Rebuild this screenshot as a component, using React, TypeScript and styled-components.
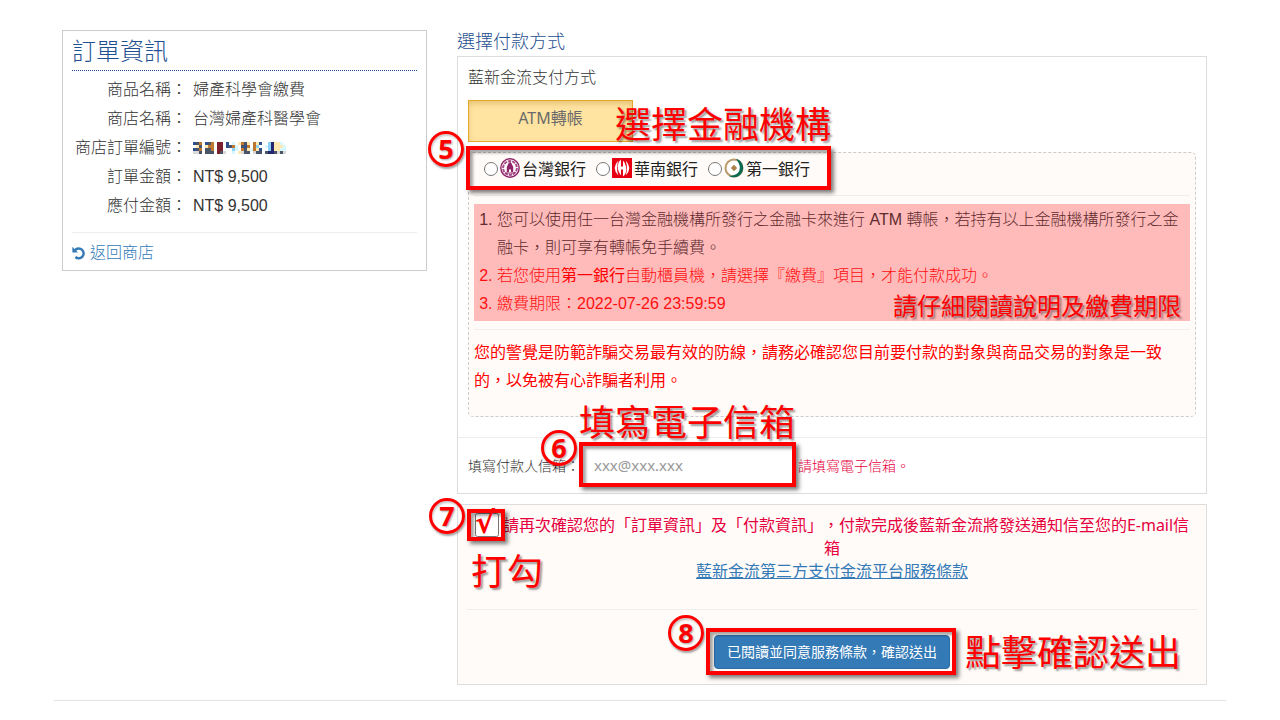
import React from "react";
import styled, { createGlobalStyle, css } from "styled-components";

const sans = `"Liberation Sans", "Noto Sans CJK TC", sans-serif`;
const humanist = `"Noto Sans", "Noto Sans CJK TC", sans-serif`;

const GlobalStyle = createGlobalStyle`
  * { box-sizing: border-box; }
  body {
    margin: 0;
    background: #fff;
    color: #333;
    font-family: ${sans};
    font-size: 16px;
    font-weight: 300;
    text-spacing-trim: space-all;
  }
`;

const Page = styled.div`
  padding: 30px 54px 0;
`;

const Columns = styled.main`
  display: grid;
  grid-template-columns: 365fr 750fr;
  gap: 30px;
  align-items: start;
  padding: 0 19px 15px 8px;
  border-bottom: 1px solid #e3e3e3;
`;

/* ---------- order summary ---------- */

const OrderCard = styled.section`
  border: 1px solid #ccc;
  padding: 0 9px;
`;

const OrderTitle = styled.h1`
  margin: 0;
  height: 40px;
  line-height: 42px;
  font-size: 24px;
  font-weight: 300;
  color: #1f5190;
  border-bottom: 1px dotted #1f5190;
`;

const OrderTable = styled.table`
  width: 100%;
  margin: 4px 0 12px;
  border-collapse: collapse;
`;

const OrderLabel = styled.th`
  width: 115px;
  padding: 0;
  line-height: 29px;
  font-weight: 300;
  text-align: right;
  white-space: nowrap;
`;

const OrderValue = styled.td`
  padding: 0 0 0 6px;
  line-height: 29px;
`;

const BackRow = styled.div`
  border-top: 1px solid #eee;
  height: 38px;
  padding-top: 8px;
`;

const BackLink = styled.a`
  display: flex;
  align-items: center;
  gap: 4px;
  color: #337ab7;
  text-decoration: none;
  line-height: 24px;
`;

const Mosaic = styled.svg`
  display: block;
`;

/* ---------- payment ---------- */

const PaymentTitle = styled.h2`
  margin: 0;
  height: 26px;
  line-height: 24px;
  font-size: 18px;
  font-weight: 300;
  color: #1f5190;
`;

const Panel = styled.section<{ $tinted?: boolean }>`
  border: 1px solid #ddd;
  background: ${(p) => (p.$tinted ? "#fffbf8" : "#fff")};
`;

const MethodBlock = styled.div`
  padding: 9px 10px 20px;
`;

const MethodTitle = styled.h3`
  margin: 0 0 10px;
  line-height: 24px;
  font-size: 16px;
  font-weight: 300;
`;

const MethodButton = styled.button`
  display: block;
  width: 165px;
  height: 42px;
  padding: 0 0 8px;
  border: 1px solid #e5a52d;
  background: #ffe3a0;
  box-shadow: inset 0 3px 5px rgba(160, 110, 0, 0.25);
  color: #6b6b6b;
  font: 16px ${humanist};
`;

const MethodDetails = styled.div`
  margin-top: 10px;
  padding: 0 5px 21px;
  border: 1px dashed #ccc;
  border-radius: 5px;
  background: #fffbf8;
`;

const BankRow = styled.div`
  display: flex;
  gap: 10px;
  height: 43px;
  padding: 3px 0 0 10px;
  border-bottom: 1px solid #eee;
`;

const BankOption = styled.label`
  display: flex;
  align-items: center;
  height: 24px;
  color: #222;
  font-weight: 400;
  white-space: nowrap;

  input {
    width: 14px;
    height: 14px;
    margin: 2px 2px 0 0;
  }

  svg {
    flex: none;
    margin-right: 2px;
  }
`;

const Notes = styled.ol`
  margin: 8px 0;
  padding: 2px 8px 3px 23px;
  background: #ffbaba;
  line-height: 28px;
`;

const Note = styled.li<{ $alert?: boolean }>`
  color: ${(p) => (p.$alert ? "#ff1010" : "#5e2b2e")};

  strong {
    font-weight: 400;
    color: #f00;
  }
`;

const FraudWarning = styled.p`
  margin: 0;
  padding-top: 9px;
  border-top: 1px solid #eee;
  line-height: 28px;
  font-weight: 400;
  color: #f00;
`;

const EmailRow = styled.div`
  display: flex;
  align-items: center;
  height: 56px;
  padding: 0 10px 2px;
  border-top: 1px solid #eee;
  font-size: 14px;
`;

const EmailInput = styled.input`
  display: block;
  width: 216px;
  height: 44px;
  padding: 0 14px;
  border: 0;
  background: transparent;
  color: #444;
  font: 15px ${humanist};

  &::placeholder {
    color: #999;
  }
`;

const FieldError = styled.span`
  margin-left: 2px;
  color: #e6003e;
`;

const ConfirmPanel = styled(Panel)`
  margin-top: 10px;
  padding: 9px 9px 15px;
`;

const ConfirmText = styled.div`
  height: 95px;
  font-family: ${humanist};
  font-weight: 400;
  line-height: 23px;
  text-align: center;
  color: #e6003e;

  a {
    color: #337ab7;
  }
`;

const ConfirmCheck = styled.input`
  width: 24px;
  height: 24px;
  margin: -1px 0;
`;

const SubmitRow = styled.div`
  display: flex;
  justify-content: center;
  padding-top: 25px;
  border-top: 1px solid #eee;
`;

const SubmitButton = styled.button`
  display: block;
  width: 236px;
  height: 34px;
  padding: 0 0 2px;
  border: 1px solid #2e6da4;
  border-radius: 4px;
  background: #337ab7;
  color: #fff;
  font: 14px ${sans};
`;

/* ---------- tutorial marks laid over the page ---------- */

const Marked = styled.div`
  position: relative;
`;

const MarkedInline = styled.span`
  position: relative;
  display: inline-block;
  height: 23px;
  margin-right: 4px;
  vertical-align: top;
`;

const Overlay = css<{ $left: number; $top: number }>`
  position: absolute;
  left: ${(p) => p.$left}px;
  top: ${(p) => p.$top}px;
  pointer-events: none;
`;

const Frame = styled.span<{ $left: number; $top: number; $width: number; $height: number }>`
  ${Overlay}
  width: ${(p) => p.$width}px;
  height: ${(p) => p.$height}px;
  border: 4px solid #f00;
  box-shadow: 3px 3px 4px rgba(0, 0, 0, 0.5), inset 3px 3px 3px rgba(0, 0, 0, 0.35);
`;

const Step = styled.span<{ $left: number; $top: number }>`
  ${Overlay}
  z-index: 1;
  width: 36px;
  height: 36px;
  border: 3px solid #f00;
  border-radius: 50%;
  line-height: 30px;
  text-align: center;
  font-family: "Noto Sans", sans-serif;
  font-size: 27px;
  font-weight: 700;
  color: #f00;
  box-shadow: 1px 2px 2px rgba(0, 0, 0, 0.35), inset 1px 2px 2px rgba(0, 0, 0, 0.2);
  text-shadow: 1px 1px 2px rgba(0, 0, 0, 0.35);
`;

const Remark = styled.span<{ $left: number; $top: number; $small?: boolean }>`
  ${Overlay}
  z-index: 1;
  white-space: nowrap;
  font-family: "Noto Sans CJK TC", sans-serif;
  font-size: ${(p) => (p.$small ? 24 : 36)}px;
  font-weight: 400;
  line-height: ${(p) => (p.$small ? 28 : 40)}px;
  color: #f00;
  text-shadow: 2px 2px 2px rgba(0, 0, 0, 0.4);
`;

const Tick = styled.span<{ $left: number; $top: number }>`
  ${Overlay}
  font-family: "DejaVu Sans", sans-serif;
  font-size: 30px;
  font-weight: 700;
  line-height: 30px;
  color: #f00;
`;

/* ---------- drawings ---------- */

const UndoIcon = () => (
  <svg width="14" height="14" viewBox="0 0 14 14" aria-hidden="true">
    <path d="M3 4.2A4.9 4.9 0 1 1 3.4 11" fill="none" stroke="#337ab7" strokeWidth="2.4" />
    <path d="M0.4 0.8V6.4H6Z" fill="#337ab7" />
  </svg>
);

const TaiwanBankIcon = () => (
  <svg width="20" height="20" viewBox="0 0 20 20" aria-hidden="true">
    <circle cx="10" cy="10" r="9.2" fill="#fff" stroke="#8f2468" strokeWidth="1.4" />
    <circle cx="10" cy="10" r="6.9" fill="none" stroke="#a8508a" strokeWidth="2" strokeDasharray="3.4 .9" />
    <path d="M10 3.8L11.6 5.6L13.2 9V14H11V11.6H9V14H6.8V9L8.4 5.6Z" fill="#8f2468" />
    <path d="M5.6 15H14.4" stroke="#8f2468" strokeWidth="1" />
  </svg>
);

const HuaNanIcon = () => (
  <svg width="20" height="20" viewBox="0 0 20 20" aria-hidden="true">
    <rect width="20" height="20" fill="#e60012" />
    <path
      d="M6.4 2.4Q-1 10 6.4 17.6Q3.6 10 6.4 2.4ZM13.6 2.4Q21 10 13.6 17.6Q16.4 10 13.6 2.4Z"
      fill="#fff"
    />
    <path d="M9 1.6Q5 5 5.8 10.6Q6.4 15 9 17.4V11.4H11V18.4Q15 15 14.2 9.4Q13.6 5 11 2.6V8.6H9Z" fill="#fff" />
  </svg>
);

const FirstBankIcon = () => (
  <svg width="20" height="20" viewBox="0 0 20 20" aria-hidden="true">
    <circle cx="10" cy="10" r="8.6" fill="#fff" />
    <circle cx="10" cy="10" r="8.5" fill="none" stroke="#b99a6b" strokeWidth="2" />
    <path d="M12 .8A9.4 9.4 0 1 1 4.6 17.8Q10.4 18 13.8 15Q18.6 9.4 12 .8Z" fill="#0b6b52" />
    <path d="M10 6.8L13.2 10L10 13.2L6.8 10Z" fill="#a9824c" />
  </svg>
);

/* Each row is one line of 3px cells; letters index the palette. */
const palette: Record<string, string> = {
  n: "#4a5468",
  b: "#2f4f8f",
  o: "#c07830",
  r: "#7c1f2c",
  y: "#ffe9b0",
  c: "#d8f8ff",
  s: "#8fd0f8",
  g: "#d9d9d9",
  k: "#26266e",
};
const mosaicRows = [
  "bno.bno.rr.b.c.yony.oyb..skyyc.",
  ".yn.yoo.rr.bnoc.nbo.os..cskyyyc",
  "bno.nno.rr...sc.onycoyb..skyycc",
  "ggn.nnn.rng..c.ygnn.gnn.nkkngng",
];

const MaskedNumber = () => (
  <Mosaic width="93" height="12" viewBox="0 0 93 12" role="img" aria-label="商店訂單編號">
    {mosaicRows.flatMap((row, y) =>
      row
        .split("")
        .map((cell, x) =>
          palette[cell] ? (
            <rect key={`${x}-${y}`} x={x * 3} y={y * 3} width="3" height="3" fill={palette[cell]} />
          ) : null
        )
    )}
  </Mosaic>
);

/* ---------- data ---------- */

const order: { label: string; value: React.ReactNode }[] = [
  { label: "商品名稱：", value: "婦產科學會繳費" },
  { label: "商店名稱：", value: "台灣婦產科醫學會" },
  { label: "商店訂單編號：", value: <MaskedNumber /> },
  { label: "訂單金額：", value: "NT$ 9,500" },
  { label: "應付金額：", value: "NT$ 9,500" },
];

const banks = [
  { id: "bot", name: "台灣銀行", icon: <TaiwanBankIcon /> },
  { id: "huanan", name: "華南銀行", icon: <HuaNanIcon /> },
  { id: "first", name: "第一銀行", icon: <FirstBankIcon /> },
];

export default function App() {
  return (
    <Page lang="zh-Hant">
      <GlobalStyle />
      <Columns>
        <OrderCard>
          <OrderTitle>訂單資訊</OrderTitle>
          <OrderTable>
            <tbody>
              {order.map((row) => (
                <tr key={row.label}>
                  <OrderLabel scope="row">{row.label}</OrderLabel>
                  <OrderValue>{row.value}</OrderValue>
                </tr>
              ))}
            </tbody>
          </OrderTable>
          <BackRow>
            <BackLink href="#store">
              <UndoIcon />
              返回商店
            </BackLink>
          </BackRow>
        </OrderCard>

        <div>
          <PaymentTitle>選擇付款方式</PaymentTitle>
          <Panel>
            <MethodBlock>
              <MethodTitle>藍新金流支付方式</MethodTitle>
              <MethodButton type="button">ATM轉帳</MethodButton>
              <MethodDetails>
                <Marked>
                  <BankRow>
                    {banks.map((bank) => (
                      <BankOption key={bank.id}>
                        <input type="radio" name="bank" value={bank.id} />
                        {bank.icon}
                        {bank.name}
                      </BankOption>
                    ))}
                  </BankRow>
                  <Frame $left={-8} $top={-7} $width={365} $height={44} />
                  <Step $left={-46} $top={-22}>5</Step>
                  <Remark $left={141} $top={-51}>選擇金融機構</Remark>
                </Marked>
                <Marked>
                  <Notes>
                    <Note>
                      您可以使用任一台灣金融機構所發行之金融卡來進行 ATM 轉帳，若持有以上金融機構所發行之金融卡，則可享有轉帳免手續費。
                    </Note>
                    <Note $alert>
                      若您使用<strong>第一銀行</strong>自動櫃員機，請選擇『繳費』項目，才能付款成功。
                    </Note>
                    <Note $alert>繳費期限：2022-07-26 23:59:59</Note>
                  </Notes>
                  <Remark $small $left={419} $top={87}>請仔細閱讀說明及繳費期限</Remark>
                </Marked>
                <FraudWarning>
                  您的警覺是防範詐騙交易最有效的防線，請務必確認您目前要付款的對象與商品交易的對象是一致的，以免被有心詐騙者利用。
                </FraudWarning>
              </MethodDetails>
            </MethodBlock>
            <EmailRow>
              <label htmlFor="payer-email">填寫付款人信箱：</label>
              <Marked>
                <EmailInput id="payer-email" type="email" placeholder="xxx@xxx.xxx" />
                <Frame $left={-1} $top={-1} $width={217} $height={45} />
                <Step $left={-39} $top={-13}>6</Step>
                <Remark $left={-1} $top={-43}>填寫電子信箱</Remark>
              </Marked>
              <FieldError>請填寫電子信箱。</FieldError>
            </EmailRow>
          </Panel>

          <ConfirmPanel $tinted>
            <ConfirmText>
              <MarkedInline>
                <ConfirmCheck id="confirm" type="checkbox" />
                <Frame $left={-8} $top={-5} $width={38} $height={32} />
                <Tick $left={0} $top={-6}>√</Tick>
                <Step $left={-46} $top={-16}>7</Step>
                <Remark $left={-4} $top={35}>打勾</Remark>
              </MarkedInline>
              <label htmlFor="confirm">
                請再次確認您的「訂單資訊」及「付款資訊」，付款完成後藍新金流將發送通知信至您的E-mail信箱
              </label>
              <br />
              <a href="#terms">藍新金流第三方支付金流平台服務條款</a>
            </ConfirmText>
            <SubmitRow>
              <Marked>
                <SubmitButton type="submit">已閱讀並同意服務條款，確認送出</SubmitButton>
                <Frame $left={-8} $top={-7} $width={250} $height={47} />
                <Step $left={-46} $top={-20}>8</Step>
                <Remark $left={251} $top={-5}>點擊確認送出</Remark>
              </Marked>
            </SubmitRow>
          </ConfirmPanel>
        </div>
      </Columns>
    </Page>
  );
}
